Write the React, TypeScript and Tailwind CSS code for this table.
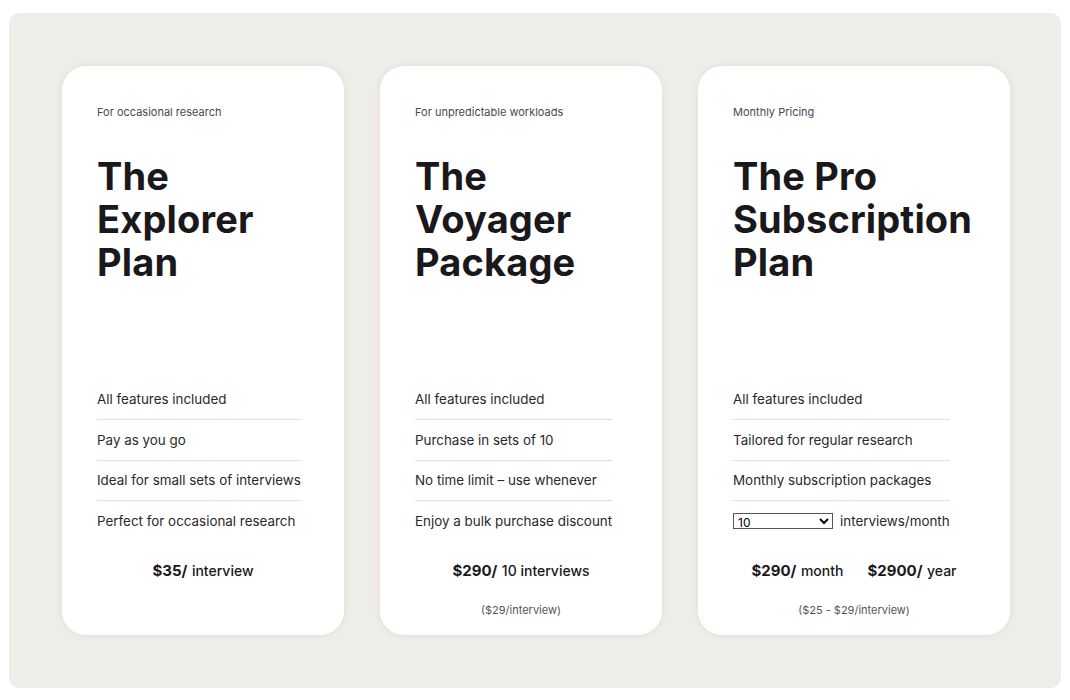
import React from "react";

type Price = { amount: string; unit: string };

type PlanProps = {
  eyebrow: string;
  title: string[];
  features: React.ReactNode[];
  prices: Price[];
  note?: string;
  wide?: boolean;
};

function Plan({ eyebrow, title, features, prices, note, wide }: PlanProps) {
  return (
    <div
      className={`flex flex-col rounded-[24px] bg-white pt-[38px] pb-[17px] pl-[35px] pr-[20px] shadow-[0_0_6px_rgba(120,100,70,0.12)] ${
        wide ? "w-[312px]" : "w-[282px]"
      }`}
    >
      <p className="text-[11px] leading-[16px] text-[#4a4a4a]">{eyebrow}</p>
      <h2 className="mt-[35px] text-[38px] font-bold leading-[43px] tracking-[0.15px] text-[#1a181b]">
        {title.map((line) => (
          <span key={line} className="block">
            {line}
          </span>
        ))}
      </h2>
      <div className="mt-auto w-fit">
        {features.map((f, i) => (
          <div
            key={i}
            className={`flex h-[40.5px] items-center text-[13.4px] text-[#2a282b] ${
              i < features.length - 1 ? "border-b border-[#e2e0dc]" : ""
            }`}
          >
            {f}
          </div>
        ))}
      </div>
      <div className="-ml-[15px] mt-[16px] flex justify-center gap-[24px]">
        {prices.map((p) => (
          <p key={p.amount} className="text-[#1a181b]">
            <span className="text-[15px] font-bold">{p.amount}/</span>{" "}
            <span className="text-[14px] font-medium">{p.unit}</span>
          </p>
        ))}
      </div>
      <p className="-ml-[15px] mt-[20px] h-[16px] text-center text-[11px] text-[#555]">
        {note}
      </p>
    </div>
  );
}

export default function App() {
  return (
    <div
      className="h-[700px] w-[1070px] bg-white pt-[13px] pl-[9px]"
      style={{ fontFamily: "Inter, 'Liberation Sans', sans-serif" }}
    >
      <div className="flex h-[675px] w-[1052px] items-stretch gap-[36px] rounded-[10px] bg-[#efede8] pl-[53px] pt-[53px] pb-[53px]">
        <Plan
          eyebrow="For occasional research"
          title={["The", "Explorer", "Plan"]}
          features={[
            "All features included",
            "Pay as you go",
            "Ideal for small sets of interviews",
            "Perfect for occasional research",
          ]}
          prices={[{ amount: "$35", unit: "interview" }]}
        />
        <Plan
          eyebrow="For unpredictable workloads"
          title={["The", "Voyager", "Package"]}
          features={[
            "All features included",
            "Purchase in sets of 10",
            "No time limit – use whenever",
            "Enjoy a bulk purchase discount",
          ]}
          prices={[{ amount: "$290", unit: "10 interviews" }]}
          note="($29/interview)"
        />
        <Plan
          wide
          eyebrow="Monthly Pricing"
          title={["The Pro", "Subscription", "Plan"]}
          features={[
            "All features included",
            "Tailored for regular research",
            "Monthly subscription packages",
            <span key="sel" className="flex items-center gap-[7px]">
              <select
                defaultValue="10"
                className="h-[16px] w-[100px] border border-[#555] bg-white text-[12px] leading-[14px] text-black"
              >
                <option value="10">10</option>
                <option value="20">20</option>
                <option value="30">30</option>
              </select>
              interviews/month
            </span>,
          ]}
          prices={[
            { amount: "$290", unit: "month" },
            { amount: "$2900", unit: "year" },
          ]}
          note="($25 - $29/interview)"
        />
      </div>
    </div>
  );
}
